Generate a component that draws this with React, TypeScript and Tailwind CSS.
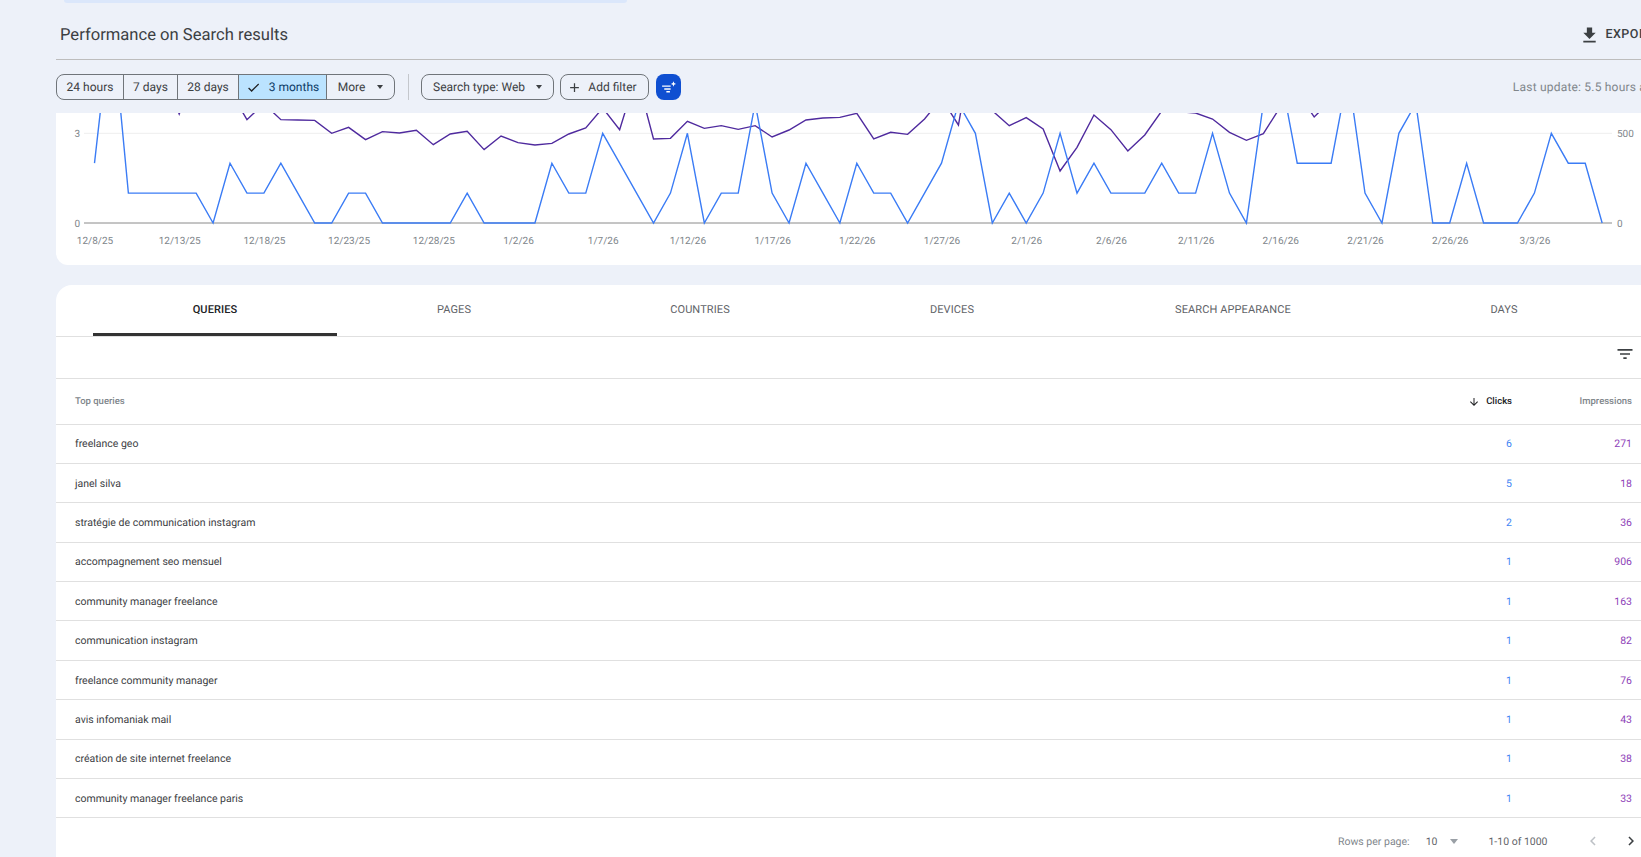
import React from "react";

const blue = [2,7,1,1,1,1,1,0,2,1,1,2,1,0,0,1,1,0,0,0,0,0,1,0,0,0,0,2,1,1,3,2,1,0,1,3,0,1,1,4,1,0,2,1,0,2,1,1,0,1,2,4,3,0,1,0,1,3,1,2,1,1,1,2,1,1,3,1,0,4,5,2,2,2,5,1,0,3,4,0,0,2,0,0,0,1,3,2,2,0];
// purple, as y in px relative to chart top (113), from the picture
const purpleZ = [-200,-200,-200,-200,-100,27,-100,-100,-43,44,-4,44,45,46,85,67,104,80,84,76,119,87,79,134,93,113,120,115,87,69,9,74,-90,102,100,49,70,62,73,62,96,75,45,39,37,25,102,82,88,42,-20,60,-228,17,62,38,72,198,127,30,74,138,90,18,20,24,42,82,106,86,6,-40,36,-15,-80,-120,-120,-120,-120,-120,-120,-120,-120,-120,-120,-120,-120,-120,-120,-120];

const X = (i: number) => 38.5 + 16.94 * i;
const bluePts = blue.map((v, i) => `${X(i)},${110 - 29.9 * v}`).join(" ");
const purplePts = purpleZ.map((z, i) => `${X(i)},${z / 3 - 8}`).join(" ");

const xLabels = ["12/8/25","12/13/25","12/18/25","12/23/25","12/28/25","1/2/26","1/7/26","1/12/26","1/17/26","1/22/26","1/27/26","2/1/26","2/6/26","2/11/26","2/16/26","2/21/26","2/26/26","3/3/26"];

const rows: [string, string, string][] = [
  ["freelance geo","6","271"],
  ["janel silva","5","18"],
  ["stratégie de communication instagram","2","36"],
  ["accompagnement seo mensuel","1","906"],
  ["community manager freelance","1","163"],
  ["communication instagram","1","82"],
  ["freelance community manager","1","76"],
  ["avis infomaniak mail","1","43"],
  ["création de site internet freelance","1","38"],
  ["community manager freelance paris","1","33"],
];

const tabs: [string, string][] = [
  ["QUERIES","w-[244px] pt-[3px] text-[#202124] font-medium border-b-[3px] border-[#333333]"],
  ["PAGES","w-[234px] text-[#5f6368]"],
  ["COUNTRIES","w-[258px] text-[#5f6368]"],
  ["DEVICES","w-[246px] text-[#5f6368]"],
  ["SEARCH APPEARANCE","w-[316px] text-[#5f6368]"],
  ["DAYS","w-[226px] text-[#5f6368]"],
];

function Icon({ d, className }: { d: string; className: string }) {
  return (
    <svg viewBox="0 0 24 24" className={className} fill="currentColor">
      <path d={d} />
    </svg>
  );
}

function Caret() {
  return <span className="w-0 h-0 border-x-[3.5px] border-x-transparent border-t-[4px] border-t-[#3c4043]" />;
}

export default function App() {
  return (
    <div className="w-[1641px] h-[857px] overflow-hidden bg-[#edf1f9] text-[#202124] font-['Roboto',sans-serif] [text-rendering:geometricPrecision]">
      <div className="ml-[64px] w-[563px] h-[3px] bg-[#dbe7fb] rounded-b-xl" />
      <div className="ml-[56px] w-[1640px]">
        {/* Header */}
        <div className="h-[57px] pl-1 pr-[41px] border-b border-[#bdbdbd] flex items-center justify-between">
          <h1 className="text-[16.6px] text-[#3c4043] mt-[10px]">Performance on Search results</h1>
          <div className="flex items-center gap-[7px] text-[12.5px] font-medium tracking-[0.5px] text-[#3c4043] mt-[9px]">
            <Icon d="M5 20h14v-2H5v2zM19 9h-4V3H9v6H5l7 7 7-7z" className="w-[17px] h-[17px] scale-125" />
            <span>EXPORT</span>
          </div>
        </div>

        {/* Filter bar */}
        <div className="h-[53px] pt-[14px] flex items-start text-[12px] text-[#3c4043]">
          <div className="flex h-[26px] border border-[#70757a] rounded-lg overflow-hidden">
            <div className="w-[67px] border-r border-[#70757a] flex items-center justify-center">24 hours</div>
            <div className="w-[54px] border-r border-[#70757a] flex items-center justify-center">7 days</div>
            <div className="w-[61px] border-r border-[#70757a] flex items-center justify-center">28 days</div>
            <div className="w-[88px] border-r border-[#70757a] bg-[#bbe3ff] flex items-center justify-center gap-[8px] text-[#0b3a66]">
              <Icon d="M9 16.17L4.83 12l-1.41 1.41L9 19 21 7l-1.41-1.41z" className="w-[15px] h-[15px] text-[#202124]" />
              <span>3 months</span>
            </div>
            <div className="w-[67px] flex items-center justify-center gap-[12px]">
              <span>More</span>
              <Caret />
            </div>
          </div>
          <div className="w-px h-[26px] bg-[#c4c7cc] ml-[13px] mr-[12px]" />
          <div className="w-[133px] h-[26px] border border-[#70757a] rounded-lg flex items-center justify-center gap-[11px]">
            <span>Search type: Web</span>
            <Caret />
          </div>
          <div className="w-[89px] h-[26px] ml-[6px] pr-[5px] border border-[#70757a] rounded-lg flex items-center justify-center gap-[6px]">
            <Icon d="M19 13h-6v6h-2v-6H5v-2h6V5h2v6h6v2z" className="w-[15px] h-[15px]" />
            <span>Add filter</span>
          </div>
          <div className="w-[25px] h-[26px] ml-[7px] rounded-lg bg-[#0f4fd1] flex items-center justify-center">
            <svg viewBox="0 0 24 24" className="w-[17px] h-[17px]" fill="#ffffff">
              <path d="M3 9h12v2H3zM6 13h9v2H6zM9 17h5v2H9z" />
              <path d="M19 3l1 2.6L22.6 7 20 8.2 19 11l-1-2.8L15.4 7 18 5.6z" />
            </svg>
          </div>
          <div className="ml-auto mr-[36px] self-center mb-[13px] text-[#80868b] tracking-[0.2px]">Last update: 5.5 hours ago</div>
        </div>

        {/* Chart */}
        <div className="h-[152px] bg-white rounded-b-xl overflow-hidden">
          <svg width="1640" height="152" className="block">
            <line x1="28" y1="20.3" x2="1556" y2="20.3" stroke="#eeeeee" strokeWidth="1" />
            <line x1="28" y1="110" x2="1556" y2="110" stroke="#8a8a8a" strokeWidth="1" />
            <polyline points={purplePts} fill="none" stroke="#4f2a9e" strokeWidth="1.4" />
            <polyline points={bluePts} fill="none" stroke="#3b7cf5" strokeWidth="1.4" />
            <g fontSize="10" fill="#80868b" fontFamily="Roboto, sans-serif">
              <text x="24" y="24" textAnchor="end">3</text>
              <text x="24" y="113.5" textAnchor="end">0</text>
              <text x="1561" y="24">500</text>
              <text x="1561" y="113.5">0</text>
              {xLabels.map((l, i) => (
                <text key={l} x={X(i * 5) + 0.5} y="130.5" textAnchor="middle">{l}</text>
              ))}
            </g>
          </svg>
        </div>

        {/* Table card */}
        <div className="mt-5 bg-white rounded-t-2xl">
          <div className="h-[52px] pl-[37px] flex border-b border-[#e0e0e0]">
            {tabs.map(([t, c]) => (
              <div key={t} className={`h-[51px] shrink-0 flex items-center justify-center text-[11px] tracking-[0.1px] ${c}`}>{t}</div>
            ))}
          </div>
          <div className="h-[41.5px] pr-[61px] pb-[6px] flex items-center justify-end border-b border-[#e0e0e0]">
            <Icon d="M10 18h4v-2h-4v2zM3 6v2h18V6H3zm3 7h12v-2H6v2z" className="w-[20px] h-[20px] text-[#3c4043]" />
          </div>
          <div className="h-[46px] pl-[19px] pr-[64px] pt-[2px] flex items-center border-b border-[#e0e0e0] text-[9.5px] font-medium text-[#80868b]">
            <div className="flex-1">Top queries</div>
            <div className="flex items-center gap-[6px] text-[#202124]">
              <Icon d="M20 12l-1.41-1.41L13 16.17V4h-2v12.17l-5.58-5.59L4 12l8 8 8-8z" className="w-[12px] h-[12px]" />
              <span>Clicks</span>
            </div>
            <div className="w-[120px] text-right">Impressions</div>
          </div>
          {rows.map(([q, c, i]) => (
            <div key={q} className="h-[39.4px] pl-[19px] pr-[64px] pt-[1px] flex items-center border-b border-[#e0e0e0] text-[10.5px]">
              <div className="flex-1 text-[#3c4043]">{q}</div>
              <div className="text-[#4285f4]">{c}</div>
              <div className="w-[120px] text-right text-[#8e3fb8]">{i}</div>
            </div>
          ))}
          <div className="h-[45px] pt-[1px] flex items-center text-[10.5px] text-[#80868b]">
            <span className="ml-[1282px]">Rows per page:</span>
            <span className="ml-[16px] text-[#5f6368]">10</span>
            <span className="ml-[13px] w-0 h-0 border-x-[4px] border-x-transparent border-t-[5px] border-t-[#9aa0a6]" />
            <span className="ml-[30px] text-[#5f6368]">1-10 of 1000</span>
            <Icon d="M15.41 7.41L14 6l-6 6 6 6 1.41-1.41L10.83 12z" className="ml-[36px] w-[18px] h-[18px] text-[#bdc1c6]" />
            <Icon d="M10 6L8.59 7.41 13.17 12l-4.58 4.59L10 18l6-6z" className="ml-[20px] w-[18px] h-[18px] text-[#3c4043]" />
          </div>
        </div>
      </div>
    </div>
  );
}
